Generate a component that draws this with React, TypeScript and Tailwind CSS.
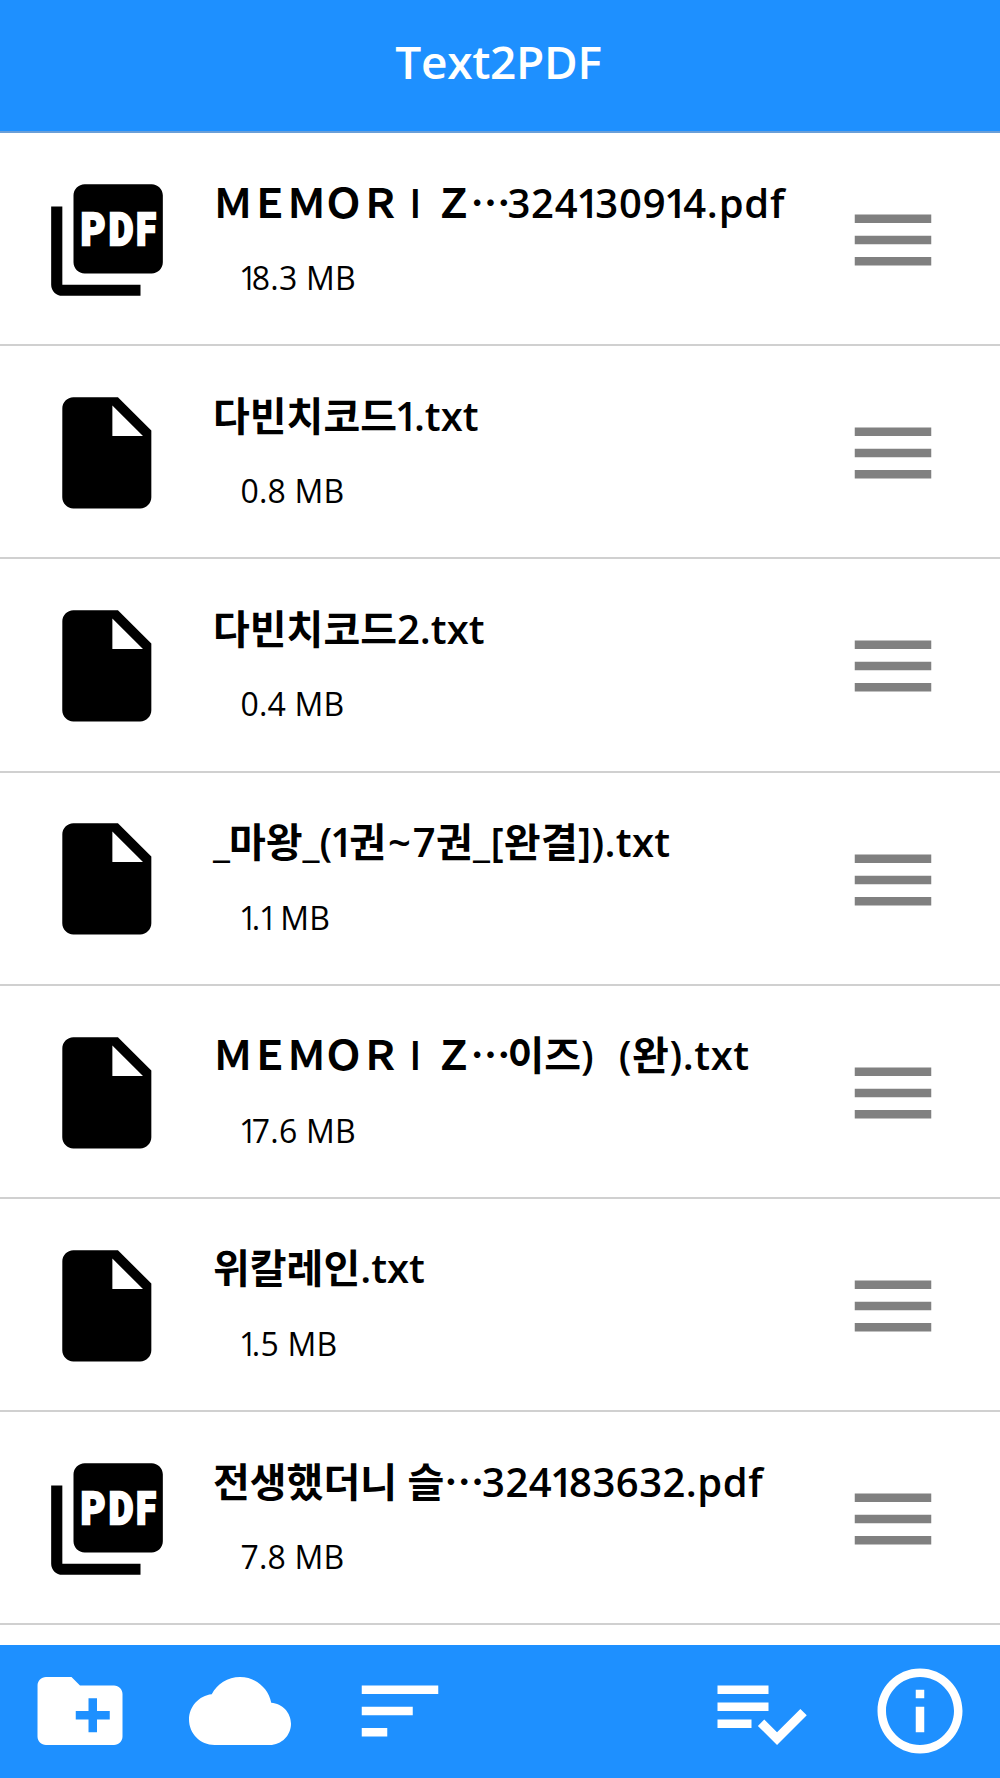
import type { ReactNode } from "react";

type Part = { text: string; kind?: "wide"; className?: string };
type Entry = { type: "pdf" | "txt"; name: Part[]; size: string };

const dots: Part = { text: "⋯", kind: "wide" };

const memoriz: Part[] = [
  { text: "ＭＥＭＯＲ", kind: "wide" },
  { text: "I", className: "inline-block w-[36.8px] text-center" },
  { text: "Ｚ", kind: "wide" },
  dots,
];

const entries: Entry[] = [
  { type: "pdf", name: [...memoriz, { text: "324130914.pdf", className: "tracking-[0.8px]" }], size: "18.3 MB" },
  { type: "txt", name: [{ text: "다빈치코드" }, { text: "1.txt" }], size: "0.8 MB" },
  { type: "txt", name: [{ text: "다빈치코드" }, { text: "2.txt" }], size: "0.4 MB" },
  {
    type: "txt",
    name: [
      { text: "_", className: "-mr-px" },
      { text: "마왕_(1권" },
      { text: "~", className: "mx-[2px]" },
      { text: "7권_[완결]).txt", className: "tracking-[0.3px]" },
    ],
    size: "1.1 MB",
  },
  { type: "txt", name: [...memoriz, { text: "이즈)" }, { text: "(완).txt", className: "ml-[25px] tracking-[0.6px]" }], size: "17.6 MB" },
  { type: "txt", name: [{ text: "위칼레인.txt" }], size: "1.5 MB" },
  {
    type: "pdf",
    name: [{ text: "전생했더니 슬" }, dots, { text: "324183632.pdf", className: "ml-px tracking-[0.5px]" }],
    size: "7.8 MB",
  },
];

/* Sets the digit one on a narrower advance than the other figures. */
function Figures({ text, oneClass }: { text: string; oneClass: string }) {
  return (
    <>
      {text.split(/(1)/).map((s, i) =>
        s === "1" ? <span key={i} className={oneClass}>1</span> : s,
      )}
    </>
  );
}

function NamePart({ part }: { part: Part }) {
  if (part.kind === "wide") {
    return (
      <span className="font-['Noto_Sans_CJK_KR',sans-serif] font-bold leading-none tracking-[-3.2px]">{part.text}</span>
    );
  }
  return (
    <span className={part.className}>
      <Figures text={part.text} oneClass="-ml-[2px] tracking-[-4px]" />
    </span>
  );
}

function Icon({ className, children }: { className: string; children: ReactNode }) {
  return (
    <svg viewBox="0 0 24 24" fill="currentColor" className={className}>
      {children}
    </svg>
  );
}

function PdfIcon() {
  return (
    <Icon className="size-[134px] shrink-0">
      <path d="M20 2H8c-1.1 0-2 .9-2 2v12c0 1.1.9 2 2 2h12c1.1 0 2-.9 2-2V4c0-1.1-.9-2-2-2zM4 6H2v14c0 1.1.9 2 2 2h14v-2H4V6z" />
      <g fill="#fff" stroke="#fff" strokeWidth="0.42" fontFamily="Roboto, sans-serif" fontWeight="900" fontSize="8">
        <text x="7.3" y="12.9" textLength="4.4" lengthAdjust="spacingAndGlyphs">P</text>
        <text x="12.3" y="12.9" textLength="4.4" lengthAdjust="spacingAndGlyphs">D</text>
        <text x="17.25" y="12.9" textLength="3.5" lengthAdjust="spacingAndGlyphs">F</text>
      </g>
    </Icon>
  );
}

function FileIcon() {
  return (
    <Icon className="size-[133.6px] shrink-0">
      <path d="M6 2c-1.1 0-1.99.9-1.99 2L4 20c0 1.1.89 2 1.99 2H18c1.1 0 2-.9 2-2V8l-6-6H6zm7 7V3.5L18.5 9H13z" />
    </Icon>
  );
}

function Row({ entry }: { entry: Entry }) {
  return (
    <li className="flex h-[213.2px] items-start border-b-[2.4px] border-[#d0d0d0] pl-[40px] pr-[56px]">
      <div className="mt-[39.8px] w-[134px]">{entry.type === "pdf" ? <PdfIcon /> : <FileIcon />}</div>
      <div className="ml-[39px] mt-[41.5px] flex-1 whitespace-nowrap text-black">
        <div className="h-14 text-[40px] font-semibold leading-[56px]">
          {entry.name.map((p, i) => (
            <NamePart key={i} part={p} />
          ))}
        </div>
        <div className="mt-[25.5px] h-11 pl-[27.5px] text-[32px] leading-[44px] tracking-[0.2px]">
          <Figures text={entry.size} oneClass="-ml-[1.5px] tracking-[-5.5px]" />
        </div>
      </div>
      <Icon className="mt-[56px] size-[102px] shrink-0 text-[#808080]">
        <path d="M3 18h18v-2H3v2zm0-5h18v-2H3v2zm0-7v2h18V6H3z" />
      </Icon>
    </li>
  );
}

export default function App() {
  return (
    <div
      lang="ko"
      className="flex h-[1778px] w-[1000px] flex-col overflow-hidden bg-white font-['Open_Sans','Noto_Sans_CJK_KR',sans-serif]"
    >
      <header className="h-[133px] shrink-0 border-b-2 border-[#6a9fd8] bg-[#1e90ff] pr-[3px] pt-[29px] text-center text-[46px] font-semibold leading-[64px] tracking-[-0.3px] text-white">
        <h1>Text2PDF</h1>
      </header>
      <ul className="min-h-0 flex-1 overflow-hidden">
        {entries.map((e, i) => (
          <Row key={i} entry={e} />
        ))}
      </ul>
      <footer className="flex h-[133.5px] shrink-0 items-start justify-between bg-[#1e90ff] px-[29px] pt-[15.7px] text-white">
        <div className="flex gap-[58px]">
          <Icon className="size-[102px]">
            <path d="M20 6h-8l-2-2H4c-1.11 0-1.99.89-1.99 2L2 18c0 1.11.89 2 2 2h16c1.11 0 2-.89 2-2V8c0-1.11-.89-2-2-2zm-1 8h-3v3h-2v-3h-3v-2h3V9h2v3h3v2z" />
          </Icon>
          <Icon className="size-[102px]">
            <path d="M19.35 10.04C18.67 6.59 15.64 4 12 4 9.11 4 6.6 5.64 5.35 8.04 2.34 8.36 0 10.91 0 14c0 3.31 2.69 6 6 6h13c2.76 0 5-2.24 5-5 0-2.64-2.05-4.78-4.65-4.96z" />
          </Icon>
          <Icon className="size-[102px]">
            <path d="M3 18h6v-2H3v2zM3 6v2h18V6H3zm0 7h12v-2H3v2z" />
          </Icon>
        </div>
        <div className="flex gap-[58px]">
          <Icon className="size-[102px]">
            <path d="M14 10H2v2h12v-2zm0-4H2v2h12V6zM2 16h8v-2H2v2zm19.5-4.5L23 13l-6.99 7-4.51-4.5L13 14l3.01 3 5.49-5.5z" />
          </Icon>
          <Icon className="size-[102px]">
            <path d="M11 17h2v-6h-2v6zm1-15C6.48 2 2 6.48 2 12s4.48 10 10 10 10-4.48 10-10S17.52 2 12 2zm0 18c-4.41 0-8-3.59-8-8s3.59-8 8-8 8 3.59 8 8-3.59 8-8 8zM11 9h2V7h-2v2z" />
          </Icon>
        </div>
      </footer>
    </div>
  );
}
